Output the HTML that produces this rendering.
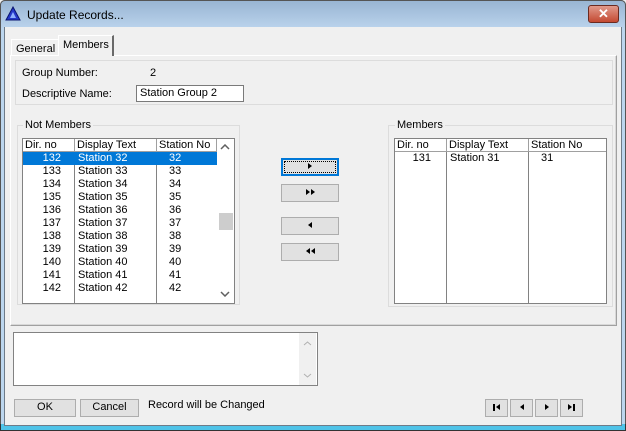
<!DOCTYPE html>
<html><head><style>
*{box-sizing:border-box;margin:0;padding:0}
body{width:626px;height:431px;overflow:hidden;background:#f0f0f0;font-family:"Liberation Sans",sans-serif;font-size:11px;color:#000;position:relative}
.a{position:absolute}
.btn{position:absolute;background:#e1e1e1;border:1px solid #adadad;text-align:center;line-height:15px}
.etch{position:absolute;border:1px solid #dcdcdc}
.list{position:absolute;background:#fff;border:1px solid #828282}
.hd{position:absolute;top:0;height:13px;border-bottom:1px solid #a0a0a0;border-right:1px solid #a0a0a0;background:#fff;padding-left:2px;line-height:12px}
.col{position:absolute;top:0;bottom:0;border-right:1px solid #828282}
.row{position:absolute;height:13px;line-height:13px;white-space:nowrap}
.tri{display:inline-block;width:0;height:0;border-top:3.5px solid transparent;border-bottom:3.5px solid transparent;vertical-align:middle}
.r{border-left:4px solid #000}.l{border-right:4px solid #000}
</style></head><body>
<div class="a" style="left:0;top:0;width:626px;height:431px;background:#bcd6ee;border:1px solid #555;border-radius:5px 5px 0 0"></div>
<div class="a" style="left:0;top:0;width:626px;height:28px;background:linear-gradient(#99b5d3,#bad3ec);border:1px solid #555;border-bottom:none;border-radius:5px 5px 0 0"></div>
<div class="a" style="left:0;top:424px;width:626px;height:7px;background:#4fc3e8;border:1px solid #333;border-top:none"></div>
<div class="a" style="left:4px;top:27px;width:618px;height:399px;background:#f0f0f0;border:1px solid #6e7b88;border-top:none"></div>
<svg class="a" style="left:5px;top:6px" width="16" height="15"><polygon points="8,1 15,14 1,14" fill="#2438c8" stroke="#0a1470"/><polygon points="8,6 11,12 5,12" fill="#8fb0ff"/></svg>
<div class="a" style="left:27px;top:8px;font-size:12px">Update Records...</div>
<div class="a" style="left:588px;top:5px;width:31px;height:18px;background:linear-gradient(#e19a8b,#c44a32);border:1px solid #6b2a20;border-radius:3px;color:#fff;font-weight:bold;text-align:center;line-height:16px;font-size:13px">✕</div>
<div class="a" style="left:10px;top:55px;width:607px;height:271px;border:1px solid #a0a0a0;border-top-color:#fff;border-left-color:#fff;box-shadow:inset -1px -1px 0 #d8d8d8"></div>
<div class="a" style="left:11px;top:39px;width:47px;height:17px;border:1px solid #fff;border-bottom:none;border-right:none;padding:3px 0 0 4px">General</div>
<div class="a" style="left:58px;top:35px;width:56px;height:21px;border:1px solid #fff;border-right:2px solid #696969;border-bottom:none;background:#f0f0f0;padding:3px 0 0 4px">Members</div>
<div class="etch" style="left:15px;top:60px;width:598px;height:45px"></div>
<div class="a" style="left:22px;top:67px">Group Number:</div>
<div class="a" style="left:150px;top:67px">2</div>
<div class="a" style="left:22px;top:88px">Descriptive Name:</div>
<div class="a" style="left:136px;top:85px;width:108px;height:17px;background:#fff;border:1px solid #7a7a7a;padding:1px 0 0 3px">Station Group 2</div>
<div class="etch" style="left:17px;top:125px;width:223px;height:180px"></div>
<div class="a" style="left:23px;top:119px;background:#f0f0f0;padding:0 2px">Not Members</div>
<div class="list" style="left:22px;top:138px;width:213px;height:166px">
<div class="col" style="left:0;width:52px"></div><div class="col" style="left:0;width:134px"></div>
<div class="hd" style="left:0;width:52px">Dir. no</div>
<div class="hd" style="left:52px;width:82px">Display Text</div>
<div class="hd" style="left:134px;width:60px">Station No</div>
<div class="a" style="left:194px;top:0;width:17px;height:164px;background:#fff"></div>
<svg class="a" style="left:197px;top:5px" width="10" height="6"><path d="M1,5 L5,1 L9,5" fill="none" stroke="#606060" stroke-width="1.5"/></svg>
<div class="a" style="left:196px;top:74px;width:14px;height:17px;background:#cdcdcd"></div>
<svg class="a" style="left:197px;top:152px" width="10" height="6"><path d="M1,1 L5,5 L9,1" fill="none" stroke="#606060" stroke-width="1.5"/></svg>
<div class="row" style="left:0;top:13px;width:194px;background:#0078d7"></div>
<div id="nm"></div>
</div>
<script>
var h='';for(var i=0;i<11;i++){var n=32+i,y=13+i*13,c=i==0?'color:#fff;':'';
h+='<div class="row" style="'+c+'left:0;top:'+y+'px;width:50px;text-align:right;padding-right:12px">'+(100+n)+'</div>';
h+='<div class="row" style="'+c+'left:55px;top:'+y+'px">Station '+n+'</div>';
h+='<div class="row" style="'+c+'left:146px;top:'+y+'px">'+n+'</div>';}
document.getElementById('nm').innerHTML=h;
</script>
<div class="btn" style="left:281px;top:158px;width:58px;height:18px;border:1px solid #0078d7;box-shadow:inset 0 0 0 1px #0078d7"><div style="position:absolute;left:2px;top:2px;right:2px;bottom:2px;border:1px dotted #000"></div><span class="tri r"></span></div>
<div class="btn" style="left:281px;top:184px;width:58px;height:18px"><span class="tri r"></span><span class="tri r" style="margin-left:1px"></span></div>
<div class="btn" style="left:281px;top:217px;width:58px;height:18px"><span class="tri l"></span></div>
<div class="btn" style="left:281px;top:243px;width:58px;height:18px"><span class="tri l"></span><span class="tri l" style="margin-left:1px"></span></div>
<div class="etch" style="left:388px;top:125px;width:225px;height:182px"></div>
<div class="a" style="left:395px;top:119px;background:#f0f0f0;padding:0 2px">Members</div>
<div class="list" style="left:394px;top:138px;width:213px;height:166px">
<div class="col" style="left:0;width:52px"></div><div class="col" style="left:0;width:134px"></div>
<div class="hd" style="left:0;width:52px">Dir. no</div>
<div class="hd" style="left:52px;width:82px">Display Text</div>
<div class="hd" style="left:134px;width:77px;border-right:none">Station No</div>
<div class="row" style="left:0;top:13px;width:50px;text-align:right;padding-right:14px">131</div>
<div class="row" style="left:55px;top:13px">Station 31</div>
<div class="row" style="left:146px;top:13px">31</div>
</div>
<div class="a" style="left:13px;top:332px;width:305px;height:54px;background:#fff;border:1px solid #828282"></div>
<div class="a" style="left:299px;top:333px;width:17px;height:52px;background:#f0f0f0"></div>
<svg class="a" style="left:303px;top:341px" width="9" height="5"><path d="M1,4 L4.5,1 L8,4" fill="none" stroke="#b0b0b0"/></svg>
<svg class="a" style="left:303px;top:373px" width="9" height="5"><path d="M1,1 L4.5,4 L8,1" fill="none" stroke="#b0b0b0"/></svg>
<div class="btn" style="left:14px;top:399px;width:62px;height:18px">OK</div>
<div class="btn" style="left:80px;top:399px;width:59px;height:18px">Cancel</div>
<div class="a" style="left:148px;top:399px">Record will be Changed</div>
<div class="btn" style="left:485px;top:399px;width:23px;height:18px"><span style="display:inline-block;width:2px;height:7px;background:#000;vertical-align:middle;margin-right:1px"></span><span class="tri l"></span></div>
<div class="btn" style="left:510px;top:399px;width:23px;height:18px"><span class="tri l"></span></div>
<div class="btn" style="left:535px;top:399px;width:23px;height:18px"><span class="tri r"></span></div>
<div class="btn" style="left:560px;top:399px;width:23px;height:18px"><span class="tri r"></span><span style="display:inline-block;width:2px;height:7px;background:#000;vertical-align:middle;margin-left:1px"></span></div>
</body></html>
